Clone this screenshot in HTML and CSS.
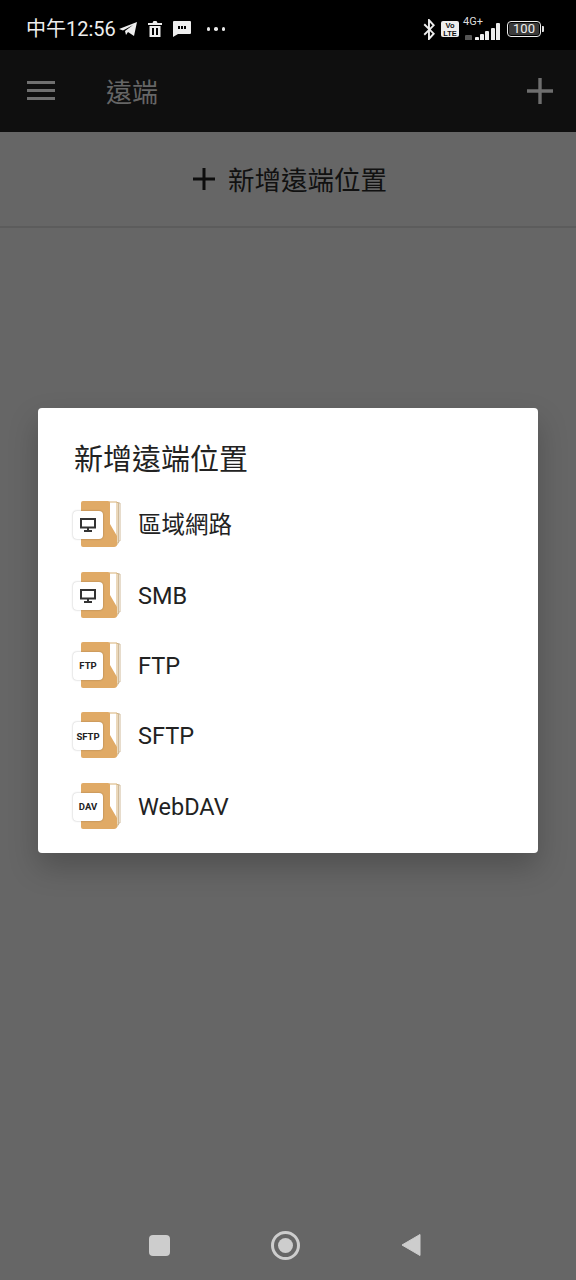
FILE: index.html
```
<!DOCTYPE html>
<html lang="zh-Hant">
<head>
<meta charset="utf-8">
<title>遠端</title>
<link rel="stylesheet" href="styles.css">
</head>
<body>
<div class="screen">
  <div class="status">
    <div class="status-left">
      <span class="clock">中午12:56</span>
      <svg class="si tg" viewBox="0 0 18 16"><path d="M0 8 18 1 15 15 9 11 7 14 6 10 14 4 4 9.500Z" fill="#eee"/></svg>
      <svg class="si trash" viewBox="0 0 14 16"><path d="M0 2H4.500L5.500 0H8.500L9.500 2H14V4H0ZM1.500 5H12.500V16H1.500ZM4 7V14H6V7ZM8 7V14H10V7Z" fill="#eee" fill-rule="evenodd"/></svg>
      <svg class="si msg" viewBox="0 0 18 16"><path d="M1 0H17Q18 0 18 1V12Q18 13 17 13H5L0 16V1Q0 0 1 0ZM5 5V8H7V5ZM8 5V8H10V5ZM11 5V8H13V5Z" fill="#eee" fill-rule="evenodd"/></svg>
      <span class="dots"><i></i><i></i><i></i></span>
    </div>
    <div class="status-right">
      <svg class="bt" viewBox="0 0 12 20"><path d="M1 5 10 14 5.500 19V1L10 6 1 15" fill="none" stroke="#eee" stroke-width="1.800"/></svg>
      <span class="volte">Vo<br>LTE</span>
      <div class="net">
        <span class="net-label">4G+</span>
        <div class="bars"><i class="b0"></i><i class="b1"></i><i class="b2"></i><i class="b3"></i><i class="b4"></i><i class="b5"></i></div>
      </div>
      <div class="battery"><span class="cell">100</span></div><span class="nub"></span>
    </div>
  </div>

  <div class="appbar">
    <div class="hamburger"><i></i><i></i><i></i></div>
    <span class="title">遠端</span>
    <svg class="bar-plus" viewBox="0 0 26 26"><path d="M13 0V26M0 13H26" stroke="#6e6e6e" stroke-width="3.400"/></svg>
  </div>

  <div class="content">
    <div class="add-row">
      <svg class="add-plus" viewBox="0 0 22 22"><path d="M11 0V22M0 11H22" stroke="#0d0d0d" stroke-width="3"/></svg>
      <span class="add-text">新增遠端位置</span>
    </div>
  </div>

  <div class="navbar">
    <span class="nav-square"></span>
    <span class="nav-home"><i></i></span>
    <svg class="nav-back" viewBox="0 0 20 24"><path d="M19 1.500V22.500L1 12Z" fill="#cdcdcd" stroke="#cdcdcd" stroke-linejoin="round"/></svg>
  </div>

  <div class="dialog">
    <h1 class="dialog-title">新增遠端位置</h1>
    <ul class="options">
      <li class="option">
        <span class="folder">
          <svg class="folder-art" viewBox="0 0 42 48"><use href="#folder"/></svg>
          <span class="badge"><svg class="monitor" viewBox="0 0 16 14"><path d="M1 1H15V9.500H1ZM4 13H12" fill="none" stroke="#333" stroke-width="2"/><path d="M8 10V13" stroke="#333" stroke-width="2"/></svg></span>
        </span>
        <span class="label">區域網路</span>
      </li>
      <li class="option">
        <span class="folder">
          <svg class="folder-art" viewBox="0 0 42 48"><use href="#folder"/></svg>
          <span class="badge"><svg class="monitor" viewBox="0 0 16 14"><path d="M1 1H15V9.500H1ZM4 13H12" fill="none" stroke="#333" stroke-width="2"/><path d="M8 10V13" stroke="#333" stroke-width="2"/></svg></span>
        </span>
        <span class="label">SMB</span>
      </li>
      <li class="option">
        <span class="folder">
          <svg class="folder-art" viewBox="0 0 42 48"><use href="#folder"/></svg>
          <span class="badge">FTP</span>
        </span>
        <span class="label">FTP</span>
      </li>
      <li class="option">
        <span class="folder">
          <svg class="folder-art" viewBox="0 0 42 48"><use href="#folder"/></svg>
          <span class="badge">SFTP</span>
        </span>
        <span class="label">SFTP</span>
      </li>
      <li class="option">
        <span class="folder">
          <svg class="folder-art" viewBox="0 0 42 48"><use href="#folder"/></svg>
          <span class="badge">DAV</span>
        </span>
        <span class="label">WebDAV</span>
      </li>
    </ul>
  </div>
</div>

<svg class="defs" width="0" height="0">
  <defs>
    <g id="folder">
      <path d="M35 3H41V41H35Z" fill="#fff" stroke="#c9b28f" stroke-width=".9"/>
      <path d="M33 2.500H39.500V43H33Z" fill="#fff" stroke="#c9b28f" stroke-width=".9"/>
      <path d="M30 2H38V45H30Z" fill="#fff" stroke="#d3a868" stroke-width=".9"/>
      <path d="M2 3Q2 1 4 1H29Q31 1 31 3V24L38 36V44Q38 47 35 47H4Q2 47 2 45Z" fill="#e0aa66"/>
    </g>
  </defs>
</svg>
</body>
</html>
```
FILE: styles.css
```
* { box-sizing: border-box; }
html, body { margin: 0; padding: 0; background: #666; }
body { font-family: "Noto Sans CJK TC", Roboto, sans-serif; }
i { display: block; }
.defs { position: absolute; }

.screen { position: relative; width: 576px; height: 1280px; display: flex; flex-direction: column; overflow: hidden; background: #666; }

.status { height: 50px; flex: none; background: #000; color: #eee; display: flex; align-items: center; justify-content: space-between; padding: 8px 32px 0 26px; }
.status-left { display: flex; align-items: center; }
.clock { font-size: 20px; line-height: 26px; font-family: Roboto, "Noto Sans CJK TC", sans-serif; white-space: nowrap; }
.si { display: block; flex: none; }
.tg { width: 18px; height: 16px; margin-left: 3px; }
.trash { width: 14px; height: 16px; margin-left: 11px; }
.msg { width: 18px; height: 16px; margin-left: 11px; }
.dots { display: flex; gap: 4px; margin-left: 16px; }
.dots i { width: 3.500px; height: 3.500px; border-radius: 50%; background: #e8e8e8; }

.status-right { display: flex; align-items: center; }
.bt { width: 15px; height: 21px; }
.volte { margin-left: 4px; width: 18px; height: 16px; border-radius: 2px; background: #eee; color: #111; font: 700 7.500px/7.500px "Liberation Sans", sans-serif; text-align: center; padding-top: 1px; }
.net { position: relative; width: 37px; height: 22px; margin-left: 4px; }
.net-label { position: absolute; left: 0; top: -2px; font: 11px/12px Roboto, sans-serif; color: #ddd; }
.bars { position: absolute; inset: 0; display: flex; align-items: flex-end; padding-left: 2px; }
.bars i { width: 4px; margin-right: 1.200px; background: #eee; border-radius: 1px 1px 0 0; }
.bars .b0 { width: 7px; height: 5px; background: #555; margin-right: 3px; }
.bars .b1 { height: 3px; }
.bars .b2 { height: 6px; }
.bars .b3 { height: 9px; }
.bars .b4 { height: 12px; }
.bars .b5 { height: 17px; margin-right: 0; }
.battery { margin-left: 7px; width: 34px; height: 16px; border: 1.500px solid #eee; border-radius: 4px; padding: 1px; display: flex; }
.cell { flex: 1; background: #3a3a3a; border-radius: 2px; color: #eee; font: 13px/11px Roboto, sans-serif; text-align: center; }
.nub { width: 2px; height: 6px; margin-left: 1px; background: #ddd; border-radius: 0 1px 1px 0; }

.appbar { height: 82px; flex: none; background: #0f0f0f; display: flex; align-items: center; padding: 0 23px 0 27px; }
.hamburger { width: 28px; display: flex; flex-direction: column; gap: 5px; margin-top: -2px; }
.hamburger i { height: 3px; background: #707070; }
.title { margin-left: 51px; font-size: 26px; line-height: 34px; color: #666; }
.bar-plus { width: 26px; height: 26px; margin-left: auto; }

.content { flex: 1; background: #666; }
.add-row { height: 96px; border-bottom: 2px solid #5c5c5c; display: flex; align-items: center; justify-content: center; gap: 13px; padding: 0 0 0 4px; }
.add-plus { width: 22px; height: 22px; }
.add-text { font-size: 26.500px; line-height: 34px; color: #111; }

.navbar { height: 70px; flex: none; background: #666; display: flex; align-items: center; justify-content: center; padding: 0 6px 0 0; }
.nav-square { width: 21px; height: 21px; border-radius: 4px; background: #cdcdcd; }
.nav-home { width: 29px; height: 29px; margin-left: 101px; border: 3px solid #cdcdcd; border-radius: 50%; display: flex; align-items: center; justify-content: center; }
.nav-home i { width: 15px; height: 15px; border-radius: 50%; background: #cdcdcd; }
.nav-back { width: 20px; height: 24px; margin-left: 101px; }

.dialog { position: absolute; left: 38px; top: 408px; width: 500px; height: 445px; background: #fff; border-radius: 4px; padding: 28px 0 0 35px; box-shadow: 0 14px 30px rgba(0,0,0,.22); }
.dialog-title { margin: 0 0 0 1px; font-size: 29px; line-height: 42px; font-weight: 400; color: #222; }
.options { list-style: none; margin: 12px 0 0 0; padding: 0; }
.option { height: 70.400px; display: flex; align-items: center; }
.folder { position: relative; width: 48px; height: 48px; flex: none; display: block; margin-top: -2px; }
.folder-art { position: absolute; left: 6px; top: 0; width: 42px; height: 48px; }
.badge { position: absolute; left: 0; top: 11px; width: 30px; height: 28px; border-radius: 4px; background: #fff; box-shadow: 0 0 2px rgba(0,0,0,.3); display: flex; align-items: center; justify-content: center; font: 700 9.500px/1 Roboto, sans-serif; color: #222; }
.monitor { width: 16px; height: 14px; }
.label { margin-left: 17px; font-size: 23.500px; line-height: 32px; color: #222; font-family: Roboto, "Noto Sans CJK TC", sans-serif; }
```
